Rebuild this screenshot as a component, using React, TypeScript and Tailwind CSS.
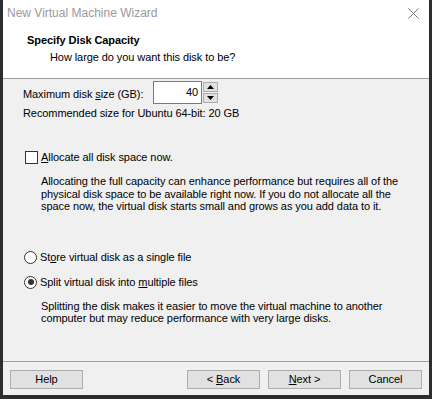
import React from "react";

function Checkbox() {
  return <span className="block h-[13px] w-[13px] shrink-0 border border-[#333333] bg-white" />;
}

function Radio({ checked = false }: { checked?: boolean }) {
  return (
    <span className="flex h-[13px] w-[13px] shrink-0 items-center justify-center rounded-full border border-[#333333] bg-white">
      {checked && <span className="block h-[6px] w-[6px] rounded-full bg-[#333333]" />}
    </span>
  );
}

function WinButton({ children }: { children: React.ReactNode }) {
  return (
    <button
      type="button"
      className="flex h-[19px] w-[73px] items-center justify-center border border-[#adadad] bg-[#e1e1e1] text-[11px] leading-none text-black"
    >
      {children}
    </button>
  );
}

export default function App() {
  return (
    <div
      className="flex h-[399px] w-[432px] flex-col border-x-[3px] border-b-[4px] border-[#2d2d2d] bg-white text-[11px] tracking-[-0.08px] text-black"
      style={{ fontFamily: '"Liberation Sans", Arial, sans-serif' }}
    >
      {/* title bar */}
      <div className="flex h-[26px] items-center justify-between pl-[4px] pr-[10px]">
        <span className="text-[12px] tracking-normal text-[#999999]">New Virtual Machine Wizard</span>
        <svg width="11" height="11" viewBox="0 0 11 11">
          <path d="M0.5 0.5 L10.5 10.5 M10.5 0.5 L0.5 10.5" stroke="#777777" strokeWidth="1" fill="none" />
        </svg>
      </div>

      {/* header */}
      <div className="h-[53px] border-b border-[#a0a0a0] pl-[24px] pt-[7px]">
        <div className="font-bold leading-[14px]">Specify Disk Capacity</div>
        <div className="mt-[3px] pl-[23px] leading-[14px]">How large do you want this disk to be?</div>
      </div>

      {/* body */}
      <div className="flex flex-1 flex-col bg-[#f0f0f0] pl-[20px]">
        <div className="mt-[2px] flex h-[23px] items-center">
          <span className="w-[130px] pt-[3px] leading-[13px]">
            Maximum disk <span className="underline">s</span>ize (GB):
          </span>
          <div className="flex h-[23px] w-[49px] items-center justify-end border border-[#7a7a7a] bg-white pr-[3px]">
            40
          </div>
          <div className="ml-[1px] flex h-[21px] w-[15px] flex-col gap-[1px]">
            <div className="flex h-[10px] items-center justify-center border border-[#adadad] bg-[#e1e1e1]">
              <svg width="7" height="4" viewBox="0 0 7 4">
                <path d="M3.5 0 L7 4 L0 4 Z" fill="#000" />
              </svg>
            </div>
            <div className="flex h-[10px] items-center justify-center border border-[#adadad] bg-[#e1e1e1]">
              <svg width="7" height="4" viewBox="0 0 7 4">
                <path d="M0 0 L7 0 L3.5 4 Z" fill="#000" />
              </svg>
            </div>
          </div>
        </div>

        <div className="mt-[3px] leading-[13px]">Recommended size for Ubuntu 64-bit: 20 GB</div>

        <div className="ml-[2px] mt-[31px] flex items-center gap-[3px] leading-[13px]">
          <Checkbox />
          <span>
            <span className="underline">A</span>llocate all disk space now.
          </span>
        </div>

        <p className="ml-[18px] mt-[11px] w-[370px] leading-[12.6px]">
          Allocating the full capacity can enhance performance but requires all of the physical disk space to be
          available right now. If you do not allocate all the space now, the virtual disk starts small and grows as
          you add data to it.
        </p>

        <div className="ml-[1px] mt-[38px] flex items-center gap-[3px] leading-[13px]">
          <Radio />
          <span>
            St<span className="underline">o</span>re virtual disk as a single file
          </span>
        </div>

        <div className="ml-[1px] mt-[12px] flex items-center gap-[3px] leading-[13px]">
          <Radio checked />
          <span>
            Split virtual disk into <span className="underline">m</span>ultiple files
          </span>
        </div>

        <p className="ml-[18px] mt-[11px] w-[370px] leading-[12.6px]">
          Splitting the disk makes it easier to move the virtual machine to another computer but may reduce
          performance with very large disks.
        </p>
      </div>

      {/* footer */}
      <div className="flex h-[34px] items-start justify-between border-t border-[#a0a0a0] bg-[#f0f0f0] px-[7px] pt-[8px]">
        <WinButton>Help</WinButton>
        <div className="flex gap-[8px]">
          <WinButton>
            &lt; <span className="ml-[3px] underline">B</span>ack
          </WinButton>
          <WinButton>
            <span className="underline">N</span>ext &gt;
          </WinButton>
          <WinButton>Cancel</WinButton>
        </div>
      </div>
    </div>
  );
}
